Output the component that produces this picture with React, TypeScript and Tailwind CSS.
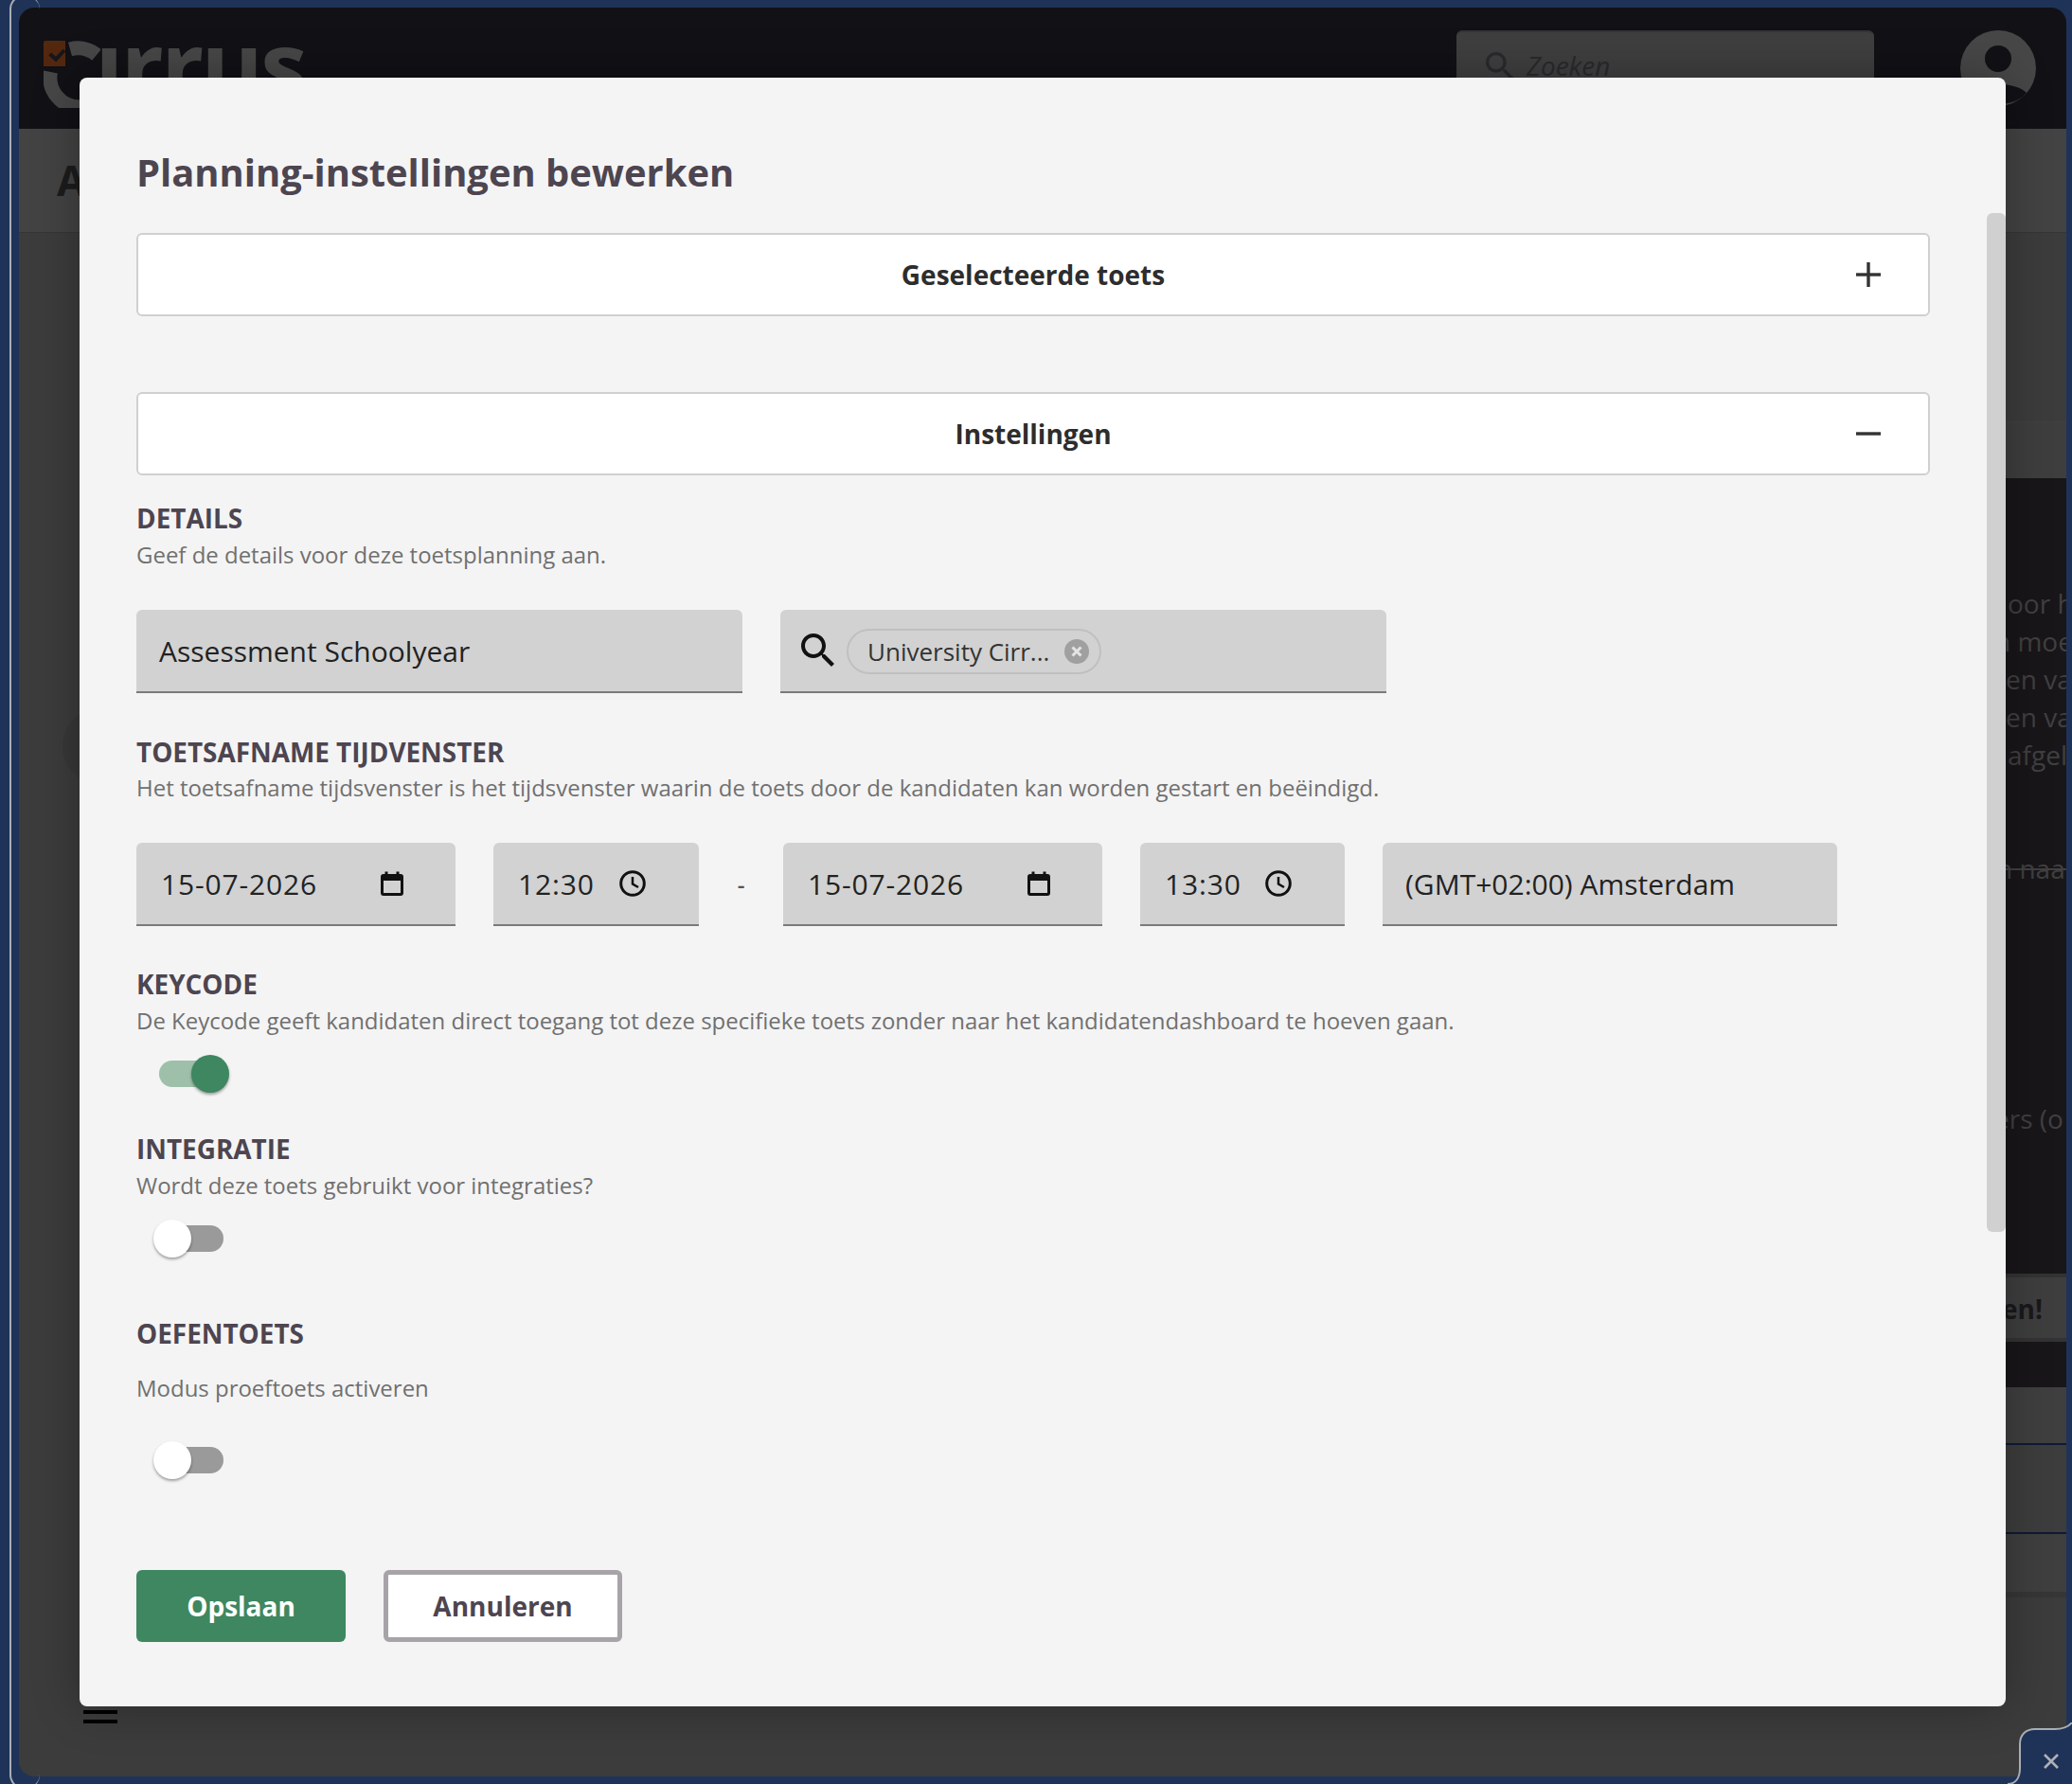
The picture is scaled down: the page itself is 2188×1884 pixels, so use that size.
import React from "react";

const Search = ({ className }: { className: string }) => (
  <svg viewBox="0 0 24 24" className={className} fill="currentColor">
    <path d="M15.5 14h-.79l-.28-.27C15.41 12.59 16 11.11 16 9.5 16 5.91 13.09 3 9.5 3S3 5.91 3 9.5 5.91 16 9.5 16c1.61 0 3.09-.59 4.23-1.57l.27.28v.79l5 4.99L20.49 19l-4.99-5zm-6 0C7.01 14 5 11.99 5 9.5S7.01 5 9.5 5 14 7.01 14 9.5 11.99 14 9.5 14z" />
  </svg>
);

const Calendar = () => (
  <svg width="24" height="26" viewBox="0 0 24 26" className="shrink-0 text-[#111]" fill="none" stroke="currentColor">
    <rect x="1.5" y="4.5" width="21" height="20" rx="1.5" strokeWidth="3" />
    <path d="M1 8h22" strokeWidth="4" />
    <path d="M6 0.5v4M18 0.5v4" strokeWidth="3" />
  </svg>
);

const Clock = () => (
  <svg width="28" height="28" viewBox="0 0 28 28" className="shrink-0 text-[#111]" fill="none" stroke="currentColor" strokeWidth="3">
    <circle cx="14" cy="14" r="12.3" />
    <path d="M14 7v7.5l6 3.5" strokeWidth="2.5" />
  </svg>
);

const Accordion = ({ title, open, className }: { title: string; open: boolean; className: string }) => (
  <div className={`relative flex h-[88px] items-center justify-center rounded-md border-2 border-[#d0d0d0] bg-white ${className}`}>
    <span className="text-[28px] font-bold leading-[38px] text-[#2d2d2d]">{title}</span>
    <svg width="26" height="26" viewBox="0 0 26 26" className="absolute right-[50px] top-[29px] text-[#333]" stroke="currentColor" strokeWidth="3.4">
      <path d="M0 13h26" />
      {open ? null : <path d="M13 0v26" />}
    </svg>
  </div>
);

const Heading = ({ children, className }: { children: string; className: string }) => (
  <h3 className={`text-[27.9px] font-bold leading-[38px] text-[#4d4550] ${className}`}>{children}</h3>
);

const Desc = ({ children, className }: { children: string; className: string }) => (
  <p className={`text-[23.98px] leading-[32px] text-[#707070] ${className}`}>{children}</p>
);

const Toggle = ({ on, className }: { on: boolean; className: string }) => (
  <div className={`relative ml-[18px] h-10 w-20 ${className}`}>
    <div className={`absolute left-[6px] top-[6px] h-7 w-[68px] rounded-full ${on ? "bg-[#9ebfa9]" : "bg-[#9a9a9a]"}`} />
    <div
      className={`absolute top-0 h-10 w-10 rounded-full shadow-[0_2px_3px_rgba(0,0,0,0.35)] ${
        on ? "left-10 bg-[#3e8760]" : "left-0 bg-white"
      }`}
    />
  </div>
);

const Field = ({ className, children }: { className: string; children: React.ReactNode }) => (
  <div className={`flex h-[88px] items-center rounded-t-md border-b-2 border-[#7a7a7a] bg-[#d2d2d2] text-[#222] ${className}`}>
    {children}
  </div>
);

const Background = () => (
  <div className="flex h-full flex-col overflow-hidden rounded-2xl bg-[#3c3c3c]">
    <header className="flex h-32 shrink-0 items-start bg-[#111116] pt-6">
      <div className="relative ml-[26px] h-[70px] w-[300px]">
        <svg width="60" height="72" viewBox="0 0 60 72" className="absolute left-0 top-[10px]" fill="none">
          <path d="M28 10A31 31 0 0 1 56 16" stroke="#474747" strokeWidth="15" />
          <path d="M7.5 34A31 31 0 0 0 38 71" stroke="#474747" strokeWidth="15" />
          <path d="M2 1h21v27H0V3a2 2 0 0 1 2-2z" fill="#54280f" />
          <path d="M6.6 15l6.4 5.6L22 11" stroke="#17171c" strokeWidth="4" />
        </svg>
        <span className="absolute left-[54px] top-[-33px] text-[100px] font-bold leading-[136px] tracking-[-3px] text-[#474747]">ırrus</span>
      </div>
      <div className="ml-auto flex h-[104px] w-[441px] rounded-md border-t-2 border-[#353535] bg-[#3f3f3f] pl-[26px] pt-[16px] text-[#2b292d]">
        <Search className="h-10 w-10" />
        <span className="ml-2 text-[28px] italic leading-[38px]">Zoeken</span>
      </div>
      <svg width="80" height="80" viewBox="0 0 80 80" className="ml-[91px] mr-[32px]">
        <circle cx="40" cy="40" r="40" fill="#474747" />
        <circle cx="40" cy="30" r="14" fill="#111116" />
        <path d="M10 66c12-12 48-12 60 0-12 16-48 16-60 0z" fill="#111116" />
      </svg>
    </header>
    <div className="h-[110px] shrink-0 border-b border-[#363636] bg-[#434343] pl-10 pt-[24px] text-[44px] font-bold leading-[60px] text-[#1c1c1c]">
      Assessment
    </div>
    <div className="flex min-h-0 flex-1">
      <div className="flex flex-1 flex-col pl-[46px]">
        <div className="mt-[502px] h-20 w-20 rounded-full bg-[#383838]" />
        <div className="ml-[22px] mt-auto mb-[56px] flex flex-col gap-[6px]">
          <div className="h-1 w-9 bg-black" />
          <div className="h-1 w-9 bg-black" />
        </div>
      </div>
      <div className="flex w-16 shrink-0 flex-col overflow-hidden whitespace-nowrap text-[28px] leading-10 text-[#404040]">
        <div className="h-[199px] bg-[#3c3c3c]" />
        <div className="h-[60px] border-t border-[#414141] bg-[#3e3e3e]" />
        <div className="h-[840px] bg-[#19161a] pt-[112px]">
          <div className="pl-[2px]">oor h</div>
          <div className="-ml-[12px]">n moe</div>
          <div>en va</div>
          <div>en var</div>
          <div className="pl-[2px]">afgel</div>
          <div className="-ml-[10px] mt-20 line-through">n naar</div>
          <div className="mt-[224px] -ml-[12px]">ers (o</div>
        </div>
        <div className="h-[72px] border-y-4 border-[#333] bg-[#3e3e3e] text-[28px] font-bold leading-[66px] text-[#1a181b]">
          <span className="-ml-[4px] block">en!</span>
        </div>
        <div className="h-12 bg-[#19161a]" />
        <div className="h-[61px] border-b-2 border-[#0e1a36] bg-[#3f3f3f]" />
        <div className="h-[94px] border-b-2 border-[#0e1a36] bg-[#3d3d3d]" />
        <div className="h-[61px] bg-[#3f3f3f]" />
        <div className="h-[6px] bg-[#363636]" />
        <div className="flex-1 bg-[#3c3c3c]" />
      </div>
    </div>
  </div>
);

export default function App() {
  return (
    <div className="relative h-[1884px] w-[2188px] overflow-hidden bg-[#1f3358] pb-2 pl-5 pr-[6px] pt-2 font-['Open_Sans',sans-serif]">
      <Background />
      <div className="absolute -bottom-[6px] -top-[6px] left-[10px] w-8 rounded-2xl border-y-2 border-l-2 border-[#a9adb5]" />
      <svg width="70" height="65" viewBox="-2 0 70 65" className="absolute bottom-0 right-0">
        <path d="M68 0C64 5 58 7 50 7H29C19 7 13 13 13 23V48C13 58 9 65 0 65H68Z" fill="#1f3358" />
        <path d="M68 0C64 5 58 7 50 7H29C19 7 13 13 13 23V48C13 58 9 65 0 65" fill="none" stroke="#a9adb5" strokeWidth="2" />
        <path d="M39 34l14 14M53 34L39 48" stroke="#aeb1b7" strokeWidth="2.6" />
      </svg>
      <div className="absolute left-[84px] top-[82px] h-[1720px] w-[2034px] overflow-hidden rounded-lg bg-[#f4f4f4] pl-[60px] pr-[80px] pt-[73px] shadow-[0_0_50px_rgba(0,0,0,0.3)]">
        <div className="absolute right-0 top-[143px] h-[1076px] w-5 rounded-md bg-[#d0d0d0]" />
        <h2 className="text-[39.9px] font-bold leading-[54px] text-[#4d4550]">Planning-instellingen bewerken</h2>
        <Accordion title="Geselecteerde toets" open={false} className="mt-[37px]" />
        <Accordion title="Instellingen" open className="mt-20" />

        <Heading className="mt-[26px]">DETAILS</Heading>
        <Desc className="mt-1">Geef de details voor deze toetsplanning aan.</Desc>
        <div className="mt-[42px] flex gap-10">
          <Field className="w-[640px] pl-6 text-[30px]">Assessment Schoolyear</Field>
          <Field className="w-[640px] pl-4">
            <Search className="h-12 w-12 text-[#111]" />
            <div className="ml-[6px] mt-[2px] flex h-12 w-[269px] items-center rounded-full border-2 border-[#c0c0c0] pl-5 text-[26px] text-[#333]">
              <span className="w-[196px]">University Cirr...</span>
              <svg width="26" height="26" viewBox="0 0 26 26" className="ml-[12px]">
                <circle cx="13" cy="13" r="13" fill="#a0a0a0" />
                <path d="M8.5 8.5l9 9M17.5 8.5l-9 9" stroke="#e4e4e4" strokeWidth="3" />
              </svg>
            </div>
          </Field>
        </div>

        <Heading className="mt-[43px]">TOETSAFNAME TIJDVENSTER</Heading>
        <Desc className="mt-[3px]">Het toetsafname tijdsvenster is het tijdsvenster waarin de toets door de kandidaten kan worden gestart en beëindigd.</Desc>
        <div className="mt-[42px] flex items-center gap-10 text-[30px]">
          <Field className="w-[337px] justify-between pl-[26px] pr-[55px] tracking-[0.85px]"><span>15-07-2026</span><Calendar /></Field>
          <Field className="w-[217px] justify-between pl-[26px] pr-[56px] tracking-[0.85px]"><span>12:30</span><Clock /></Field>
          <span className="w-[9px] text-center text-[24px] font-semibold text-[#555]">-</span>
          <Field className="w-[337px] justify-between pl-[26px] pr-[55px] tracking-[0.85px]"><span>15-07-2026</span><Calendar /></Field>
          <Field className="w-[216px] justify-between pl-[26px] pr-[56px] tracking-[0.85px]"><span>13:30</span><Clock /></Field>
          <Field className="w-[480px] pl-6">(GMT+02:00) Amsterdam</Field>
        </div>

        <Heading className="mt-[42px]">KEYCODE</Heading>
        <Desc className="mt-1">De Keycode geeft kandidaten direct toegang tot deze specifieke toets zonder naar het kandidatendashboard te hoeven gaan.</Desc>
        <Toggle on className="mt-5" />

        <Heading className="mt-10">INTEGRATIE</Heading>
        <Desc className="mt-1">Wordt deze toets gebruikt voor integraties?</Desc>
        <Toggle on={false} className="mt-5" />

        <Heading className="mt-[61px]">OEFENTOETS</Heading>
        <Desc className="mt-[23px]">Modus proeftoets activeren</Desc>
        <Toggle on={false} className="mt-10" />

        <div className="mt-24 flex gap-10">
          <button className="h-[76px] w-[221px] rounded-md bg-[#3e8760] text-[28px] font-bold text-white">Opslaan</button>
          <button className="h-[76px] w-[252px] rounded-md border-[5px] border-[#a8a3a8] bg-white text-[28px] font-bold text-[#4d4550]">Annuleren</button>
        </div>
      </div>
    </div>
  );
}
